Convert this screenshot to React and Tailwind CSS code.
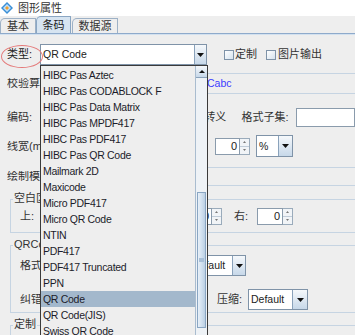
import React from "react";

const Tri = ({ up, w = 7, h = 4, color = "#111" }) => (
  <svg width={w} height={h} viewBox={`0 0 ${w} ${h}`}>
    <polygon points={up ? `0,${h} ${w},${h} ${w / 2},0` : `0,0 ${w},0 ${w / 2},${h}`} fill={color} />
  </svg>
);

const ArrowBtn = ({ className }) => (
  <div className={`flex items-center justify-center border-l border-[#8aa2bb] bg-gradient-to-b from-[#f5f8fb] to-[#c7d8e9] ${className}`}>
    <Tri />
  </div>
);

const Spin = ({ inputW, value = "0" }) => (
  <div className="flex h-[17px]">
    <div className={`${inputW} h-full bg-white border border-[#8a9bac] flex items-center justify-end pr-[2px] text-[11px] text-[#222]`}>{value}</div>
    <div className="w-[10px] h-full flex flex-col border border-l-0 border-[#9aabbb]">
      <div className="flex-1 flex items-center justify-center bg-[#f1f4f7] border-b border-[#c0ccd8]"><Tri up w={3} h={2} color="#777" /></div>
      <div className="flex-1 flex items-center justify-center bg-[#f1f4f7]"><Tri w={3} h={2} color="#777" /></div>
    </div>
  </div>
);

const Line = () => <div className="ml-[120px] h-px bg-[#c6d4e2]" />;

const Tab = ({ children, selected, className }) => (
  <div
    className={`${className} flex items-center justify-center border border-b-0 rounded-tl-[5px] text-[11px] ${
      selected ? "h-[17px] bg-[#d6e4f1] border-[#8aa6c3] text-[#222]" : "h-[15px] bg-[#eeeeee] border-[#9db1c6] text-[#333]"
    }`}
  >
    {children}
  </div>
);

const items = [
  "HIBC Pas Aztec",
  "HIBC Pas CODABLOCK F",
  "HIBC Pas Data Matrix",
  "HIBC Pas MPDF417",
  "HIBC Pas PDF417",
  "HIBC Pas QR Code",
  "Mailmark 2D",
  "Maxicode",
  "Micro PDF417",
  "Micro QR Code",
  "NTIN",
  "PDF417",
  "PDF417 Truncated",
  "PPN",
  "QR Code",
  "QR Code(JIS)",
  "Swiss QR Code",
];

const Group = ({ title, titleW, className, children }) => (
  <div className={`relative ml-[10px] w-[360px] border border-r-0 border-[#c6d4e2] ${className}`}>
    <div className={`absolute -top-[8px] left-[2px] ${titleW} overflow-hidden whitespace-nowrap bg-[#eeeeee] pl-px leading-[13px] text-[11px] text-[#333]`}>{title}</div>
    {children}
  </div>
);

const Clip = ({ w, children }) => (
  <div className={`${w} shrink-0 overflow-hidden whitespace-nowrap`}>{children}</div>
);

export default function App() {
  return (
    <div className="relative w-[355px] h-[335px] overflow-hidden bg-[#eeeeee] text-[11px] leading-none text-[#333] font-['Liberation_Sans','Noto_Sans_CJK_SC',sans-serif]">
      {/* title bar */}
      <div className="h-4 bg-white flex items-center pl-[1px]">
        <svg width="12" height="12" viewBox="0 0 12 12">
          <polygon points="6,0 12,6 6,12 0,6" fill="#3a8fd6" />
          <polygon points="6,2 10,6 6,10 2,6" fill="#bfe0fa" />
          <polygon points="6,4 8,6 6,8 4,6" fill="#f0a030" />
        </svg>
        <span className="ml-[5px] text-[11px] text-[#333]">图形属性</span>
      </div>
      {/* tabs */}
      <div className="h-[17px] flex items-end">
        <Tab className="w-[36px]">基本</Tab>
        <Tab selected className="w-[35px]">条码</Tab>
        <Tab className="w-[46px] ml-px">数据源</Tab>
      </div>
      <div className="h-px bg-[#8eaacb]" />
      <div className="h-px bg-[#d3e1ef]" />

      {/* row 1 */}
      <div className="h-[38px] pt-[9px] pl-[7px] flex items-start">
        <div className="w-[33px] h-[21px] flex items-center text-[#222]">类型:</div>
        <div className="w-[167px] h-[21px] flex bg-white border border-[#7f93a8]">
          <div className="flex-1 flex items-center pl-[2px] text-[10.5px] text-[#222]">QR Code</div>
          <ArrowBtn className="w-[12px]" />
        </div>
        <div className="ml-[17px] mt-[6px] w-[10px] h-[10px] border border-[#7f93a8] bg-gradient-to-br from-white to-[#d5e2ee]" />
        <div className="ml-[1px] h-[21px] flex items-center">定制</div>
        <div className="ml-[9px] mt-[6px] w-[10px] h-[10px] border border-[#7f93a8] bg-gradient-to-br from-white to-[#d5e2ee]" />
        <div className="ml-[2px] h-[21px] flex items-center">图片输出</div>
      </div>
      <Line />
      {/* row 2 */}
      <div className="h-[19px] pl-[7px] flex items-center">
        <Clip w="w-[33px]">校验算法:</Clip>
        <div className="w-[167px] shrink-0" />
        <div className="text-[10.5px] text-[#3b3bff]">Cabc</div>
      </div>
      <Line />
      {/* row 3 panel */}
      <div className="h-[73px] pl-[7px] flex flex-col">
        <div className="mt-[13px] h-[20px] flex items-center">
          <div className="w-[200px]">编码:</div>
          <div className="w-[38px]">转义</div>
          <div className="w-[55px]">格式子集:</div>
          <div className="w-[60px] h-[19px] bg-white border border-[#8a9bac]" />
        </div>
        <div className="mt-[8px] h-[22px] flex items-center">
          <Clip w="w-[33px]">线宽(mm):</Clip>
          <div className="w-[175px] shrink-0" />
          <Spin inputW="w-[25px]" />
          <div className="ml-[6px] w-[37px] h-[22px] flex bg-white border border-[#7f93a8]">
            <div className="flex-1 flex items-center pl-[2px] text-[10.5px] text-[#222]">%</div>
            <ArrowBtn className="w-[14px]" />
          </div>
        </div>
      </div>
      <Line />
      <div className="h-[17px] pl-[7px] flex items-center">
        <Clip w="w-[33px]">绘制模式:</Clip>
      </div>
      <Line />

      {/* group 1 */}
      <Group title="空白区域" titleW="w-[28px]" className="mt-[13px] h-[34px]">
        <div className="h-full pl-[9px] flex items-center">
          <div className="w-[165px]">上:</div>
          <Spin inputW="w-[27px]" />
          <div className="ml-[12px] w-[23px]">右:</div>
          <Spin inputW="w-[26px]" />
        </div>
      </Group>

      {/* group 2 */}
      <Group title="QRCode" titleW="w-[28px]" className="mt-[12px] h-[68px]">
        <div className="pl-[9px] flex flex-col">
          <div className="mt-[9px] h-[21px] flex items-center">
            <Clip w="w-[20px]">格式:</Clip>
            <div className="w-[149px] shrink-0" />
            <div className="w-[57px] h-[21px] flex bg-white border border-[#7f93a8]">
              <div className="flex-1 flex items-center pl-[2px] text-[10.5px] text-[#222]">Default</div>
              <ArrowBtn className="w-[13px]" />
            </div>
          </div>
          <div className="mt-[13px] h-[21px] flex items-center">
            <Clip w="w-[20px]">纠错:</Clip>
            <div className="w-[177px] shrink-0" />
            <div className="w-[31px]">压缩:</div>
            <div className="w-[60px] h-[21px] flex bg-white border border-[#7f93a8]">
              <div className="flex-1 flex items-center pl-[2px] text-[10.5px] text-[#222]">Default</div>
              <ArrowBtn className="w-[15px]" />
            </div>
          </div>
        </div>
      </Group>

      {/* group 3 */}
      <Group title="定制" titleW="w-[24px]" className="mt-[12px] h-[40px]" />

      {/* dropdown popup */}
      <div className="absolute left-[40px] top-[65px] w-[168px] h-[280px] flex bg-[#eeeeee] border border-b-0 border-[#3a3a3a]">
        <div className="flex-1 pt-[1px] flex flex-col overflow-hidden">
          {items.map((t) => (
            <div
              key={t}
              className={`h-[16px] shrink-0 flex items-center pl-[2px] text-[10.5px] tracking-[-0.3px] whitespace-nowrap text-[#1c1c2a] ${t === "QR Code" ? "bg-[#a3b8cc]" : ""}`}
            >
              {t}
            </div>
          ))}
        </div>
        <div className="w-[12px] shrink-0 flex flex-col border-l border-[#a9bccf] bg-[#eef2f6]">
          <div className="h-[12px] flex items-center justify-center border-b border-[#8aa2bb] bg-gradient-to-b from-[#f5f8fb] to-[#c7d8e9]">
            <Tri up w={6} h={3} />
          </div>
          <div className="h-[114px]" />
          <div className="h-[136px] mx-px flex items-center justify-center border border-[#8aa6c3] bg-gradient-to-r from-[#e8f0f8] via-[#d2e1f0] to-[#bcd0e4]">
            <div className="w-[5px] h-[4px] bg-[#a9c0d8]" />
          </div>
        </div>
      </div>

      {/* red ellipse annotation */}
      <div className="absolute left-[1px] top-[45px] w-[42px] h-[23px] rounded-[50%] border border-[#e47a7a]" />
    </div>
  );
}
